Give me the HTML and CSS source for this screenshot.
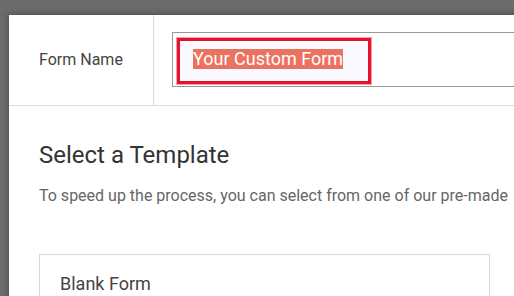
FILE: index.html
```html
<!DOCTYPE html>
<html>
<head>
<meta charset="utf-8">
<link rel="stylesheet" href="styles.css">
</head>
<body>
<div class="panel">
  <div class="name-row">
    <div class="name-label">Form Name</div>
    <div class="name-field">
      <div class="input">
        <div class="highlight"><span class="sel">Your Custom Form</span></div>
      </div>
    </div>
  </div>
  <div class="templates">
    <h2 class="title">Select a Template</h2>
    <p class="desc">To speed up the process, you can select from one of our pre-made</p>
    <div class="card">
      <div class="card-title">Blank Form</div>
    </div>
  </div>
</div>
</body>
</html>
```
FILE: styles.css
```css
html, body {
  margin: 0;
  height: 100%;
  overflow: hidden;
}
body {
  background: #6b6b6b;
  padding: 15px 0 0 9px;
  box-sizing: border-box;
  font-family: Roboto, "Liberation Sans", sans-serif;
}
.panel {
  background: #fff;
  width: 700px;
  height: 400px;
  box-shadow: 0 0 6px rgba(0,0,0,0.35);
}
.name-row {
  display: flex;
  height: 90px;
  border-bottom: 1px solid #dcdcdc;
}
.name-label {
  flex: 0 0 145px;
  border-right: 1px solid #dcdcdc;
  display: flex;
  align-items: center;
  padding-left: 30px;
  box-sizing: border-box;
  font-size: 16px;
  color: #444;
  padding-bottom: 2px;
  white-space: nowrap;
}
.name-field {
  flex: 1;
  padding: 17px 0 0 18px;
}
.input {
  border: 1px solid #999;
  width: 600px;
  padding: 5px 0 0 4px;
  box-sizing: border-box;
  height: 55px;
}
.highlight {
  box-sizing: border-box;
  width: 194px;
  height: 46px;
  border: 3px solid #e8112d;
  box-shadow: 0 0 0 1px #f3a1ab;
  background: #f9f9ff;
  padding: 8px 0 0 13px;
}
.sel {
  display: inline-block;
  background: #ec7260;
  color: #fff;
  font-size: 18px;
  line-height: 20px;
}
.templates {
  padding: 35px 0 0 30px;
}
.title {
  margin: 0;
  font-weight: 400;
  font-size: 24px;
  color: #333;
  line-height: 28px;
}
.desc {
  margin: 17px 0 0;
  font-size: 16px;
  color: #666;
  white-space: nowrap;
  line-height: 19px;
}
.card {
  margin-top: 49px;
  width: 451px;
  box-sizing: border-box;
  border: 1px solid #d6d6d6;
  padding: 18px 0 0 20px;
  height: 80px;
}
.card-title {
  font-size: 18px;
  color: #444;
  line-height: 21px;
}
```
